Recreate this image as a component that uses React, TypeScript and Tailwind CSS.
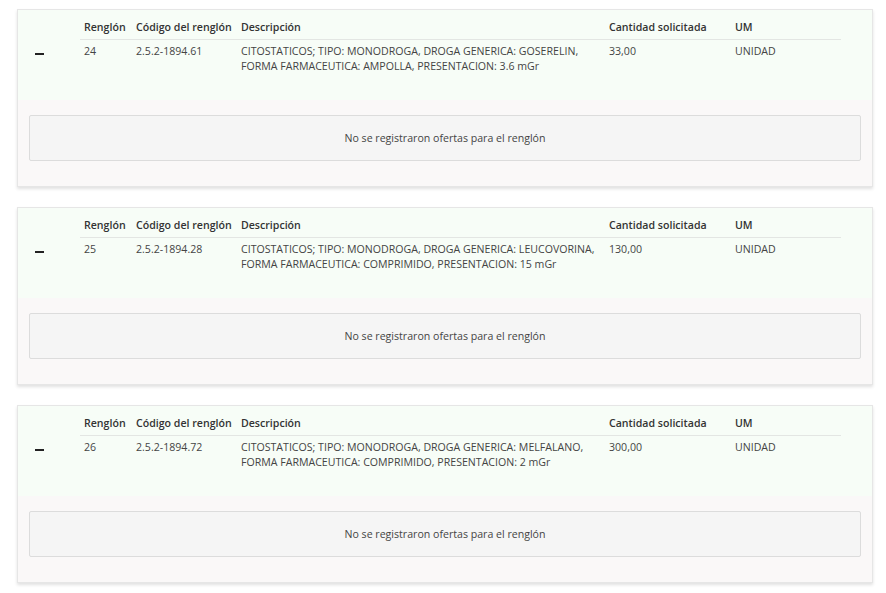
const rows = [
  {
    renglon: "24",
    codigo: "2.5.2-1894.61",
    desc: [
      "CITOSTATICOS; TIPO: MONODROGA, DROGA GENERICA: GOSERELIN,",
      "FORMA FARMACEUTICA: AMPOLLA, PRESENTACION: 3.6 mGr",
    ],
    cantidad: "33,00",
    um: "UNIDAD",
  },
  {
    renglon: "25",
    codigo: "2.5.2-1894.28",
    desc: [
      "CITOSTATICOS; TIPO: MONODROGA, DROGA GENERICA: LEUCOVORINA,",
      "FORMA FARMACEUTICA: COMPRIMIDO, PRESENTACION: 15 mGr",
    ],
    cantidad: "130,00",
    um: "UNIDAD",
  },
  {
    renglon: "26",
    codigo: "2.5.2-1894.72",
    desc: [
      "CITOSTATICOS; TIPO: MONODROGA, DROGA GENERICA: MELFALANO,",
      "FORMA FARMACEUTICA: COMPRIMIDO, PRESENTACION: 2 mGr",
    ],
    cantidad: "300,00",
    um: "UNIDAD",
  },
];

const cols = "grid grid-cols-[52px_105px_368px_126px_110px]";

function RenglonCard({ r }: { r: (typeof rows)[number] }) {
  return (
    <div className="border border-[#e6e6e6] bg-[#faf8f8] shadow-[0_2px_3px_rgba(0,0,0,0.12)]">
      <div className="flex h-[90px] bg-[#f7fdf7] pt-[6px]">
        <div className="w-[62px] shrink-0 pl-[17px] pt-[37px]">
          <div className="h-[2px] w-[9px] bg-[#222]" />
        </div>
        <div className="w-[761px]">
          <div className={`${cols} border-b border-[#e3e6e3] font-semibold text-[#333]`}>
            <div className="py-[4px] pl-[4px]">Renglón</div>
            <div className="py-[4px] pl-[4px]">Código del renglón</div>
            <div className="py-[4px] pl-[4px]">Descripción</div>
            <div className="py-[4px] pl-[4px]">Cantidad solicitada</div>
            <div className="py-[4px] pl-[4px]">UM</div>
          </div>
          <div className={`${cols} text-[#444]`}>
            <div className="pt-[4px] pl-[4px]">{r.renglon}</div>
            <div className="pt-[4px] pl-[4px]">{r.codigo}</div>
            <div className="pt-[4px] pl-[4px] whitespace-nowrap">
              {r.desc.map((d) => (
                <div key={d}>{d}</div>
              ))}
            </div>
            <div className="pt-[4px] pl-[4px]">{r.cantidad}</div>
            <div className="pt-[4px] pl-[4px]">{r.um}</div>
          </div>
        </div>
      </div>
      <div className="px-[11px] pt-[15px] pb-[25px]">
        <div className="flex h-[46px] items-center justify-center rounded-[2px] border border-[#dcdcdc] bg-[#f5f5f5] text-[#444]">
          No se registraron ofertas para el renglón
        </div>
      </div>
    </div>
  );
}

export default function App() {
  return (
    <div
      className="min-h-screen bg-white pl-[17px] pr-[13px] pt-[9px] text-[10.6px] leading-[15px]"
      style={{ fontFamily: '"Open Sans", sans-serif' }}
    >
      <div className="flex flex-col gap-[20px]">
        {rows.map((r) => (
          <RenglonCard key={r.renglon} r={r} />
        ))}
      </div>
    </div>
  );
}
